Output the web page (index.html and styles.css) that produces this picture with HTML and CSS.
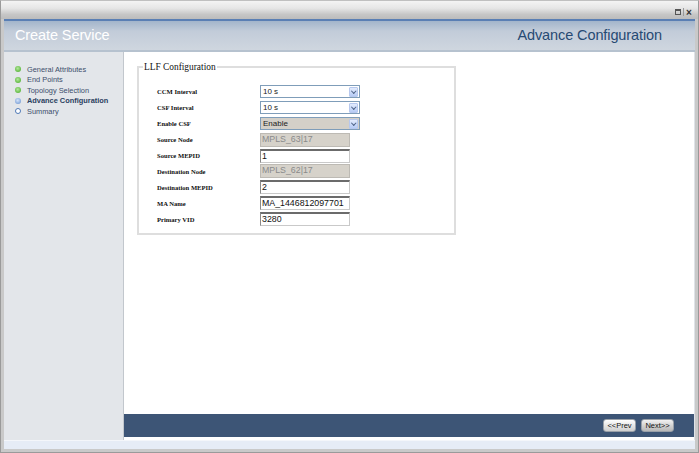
FILE: index.html
```html
<!DOCTYPE html>
<html>
<head>
<meta charset="utf-8">
<link rel="stylesheet" href="styles.css">
</head>
<body>
<div class="window">
  <div class="titlebar">
    <span class="tb-icon tb-max"></span>
    <span class="tb-sep"></span>
    <span class="tb-icon tb-close">×</span>
  </div>
  <div class="header">
    <div class="header-title">Create Service</div>
    <div class="header-step">Advance Configuration</div>
  </div>
  <div class="main">
    <div class="sidebar">
      <ul class="steps">
        <li class="step done"><span class="dot"></span>General Attributes</li>
        <li class="step done"><span class="dot"></span>End Points</li>
        <li class="step done"><span class="dot"></span>Topology Selection</li>
        <li class="step active"><span class="dot"></span>Advance Configuration</li>
        <li class="step todo"><span class="dot"></span>Summary</li>
      </ul>
    </div>
    <div class="content">
      <div class="pane">
        <fieldset class="box">
          <legend>LLF Configuration</legend>
          <div class="form">
            <label>CCM Interval</label>
            <div class="select"><span>10 s</span><i class="arrow"></i></div>
            <label>CSF Interval</label>
            <div class="select"><span>10 s</span><i class="arrow"></i></div>
            <label>Enable CSF</label>
            <div class="select disabled"><span>Enable</span><i class="arrow"></i></div>
            <label>Source Node</label>
            <div class="input disabled">MPLS_63|17</div>
            <label>Source MEPID</label>
            <div class="input">1</div>
            <label>Destination Node</label>
            <div class="input disabled">MPLS_62|17</div>
            <label>Destination MEPID</label>
            <div class="input">2</div>
            <label>MA Name</label>
            <div class="input">MA_1446812097701</div>
            <label>Primary VID</label>
            <div class="input">3280</div>
          </div>
        </fieldset>
      </div>
      <div class="footer">
        <button class="btn">&lt;&lt;Prev</button>
        <button class="btn">Next&gt;&gt;</button>
      </div>
    </div>
  </div>
  <div class="bottom"></div>
</div>
</body>
</html>
```

FILE: styles.css
```css
* { box-sizing: border-box; }
html, body { margin: 0; padding: 0; }
body {
  width: 699px;
  height: 453px;
  overflow: hidden;
  font-family: "Liberation Sans", Arial, sans-serif;
  background: #ffffff;
}
.window {
  width: 699px;
  height: 453px;
  display: flex;
  flex-direction: column;
  background: #c9c9c9;
  border: 1px solid #9a9a9a;
  border-top-color: #c0c0c0;
  padding: 0 3px 3px 3px;
}
.titlebar {
  height: 18px;
  margin: 0 -3px;
  background: linear-gradient(#f4f4f4 0%, #e6e6e6 40%, #c6c6c6 75%, #bcbcbc 100%);
  display: flex;
  justify-content: flex-end;
  align-items: center;
  padding: 4px 5px 0 0;
  gap: 2px;
}
.tb-icon {
  width: 7px;
  height: 7px;
  display: block;
}
.tb-max {
  border: 1px solid #555;
  border-top-width: 2px;
  width: 6px;
  height: 6px;
}
.tb-sep { width: 1px; height: 8px; background: #999; display: block; }
.tb-close {
  font-size: 10px;
  line-height: 7px;
  color: #333;
  font-weight: bold;
}
.header {
  height: 33px;
  border-top: 2px solid #5a7fb4;
  border-bottom: 2px solid #b6c2cf;
  background: linear-gradient(#a3b5cb 0%, #c2ccd9 35%, #cfd6df 100%);
  display: flex;
  justify-content: space-between;
  align-items: center;
  padding: 0 33px 1px 11px;
}
.header-title {
  color: #ffffff;
  font-size: 14.5px;
  letter-spacing: -0.1px;
}
.header-step {
  color: #274a73;
  font-size: 14.5px;
  letter-spacing: -0.1px;
}
.main {
  flex: 1;
  display: flex;
  background: #ffffff;
}
.sidebar {
  width: 120px;
  background: #e3e6ea;
  border-right: 1px solid #c2c7cd;
  padding-top: 12px;
}
.steps {
  list-style: none;
  margin: 0;
  padding: 0 0 0 11px;
}
.step {
  display: flex;
  align-items: center;
  height: 10.5px;
  font-size: 7.4px;
  color: #3c4e6a;
  white-space: nowrap;
}
.step.active { font-weight: bold; color: #2b3f60; }
.dot {
  width: 6px;
  height: 6px;
  border-radius: 50%;
  margin-right: 6px;
  flex: none;
}
.done .dot { background: radial-gradient(circle at 45% 40%, #b6e6a0 0%, #6cc24e 60%, #4fa03a 100%); }
.active .dot { background: radial-gradient(circle at 45% 40%, #d6e4f8 0%, #8fb0e0 60%, #5d84c0 100%); }
.todo .dot { border: 1.5px solid #4f79b6; background: #fff; }
.content {
  flex: 1;
  display: flex;
  flex-direction: column;
  border-right: 1px solid #dfe3e8;
}
.pane {
  flex: 1;
  padding: 10px 0 0 13px;
}
.box {
  width: 319px;
  height: 173px;
  margin: 0;
  border: 2px solid #dedede;
  padding: 4px 0 0 0;
}
.box legend {
  font-family: "Liberation Serif", "Times New Roman", serif;
  font-size: 9.4px;
  color: #111;
  padding: 0 1px;
  margin-left: 4px;
}
.form {
  display: grid;
  grid-template-columns: 103px 100px;
  grid-auto-rows: 15.9px;
  align-items: center;
  margin: 8px 0 0 18px;
}
.form label {
  font-family: "Liberation Serif", "Times New Roman", serif;
  font-weight: bold;
  font-size: 6.6px;
  color: #111;
}
.select {
  width: 100px;
  height: 13px;
  border: 1px solid #7f9db9;
  background: #fff;
  display: flex;
  align-items: center;
  justify-content: space-between;
  padding: 0 1px 0 2px;
  font-size: 8px;
  color: #222;
}
.select.disabled { background: #d4d0c8; }
.arrow {
  width: 9px;
  height: 10px;
  background: linear-gradient(#e2ebfd, #b6cbf5);
  border: 1px solid #b7c8ee;
  border-radius: 1px;
  position: relative;
}
.arrow::after {
  content: "";
  position: absolute;
  left: 1.5px;
  top: 1.5px;
  width: 2.5px;
  height: 2.5px;
  border-right: 1.3px solid #4d6185;
  border-bottom: 1.3px solid #4d6185;
  transform: rotate(45deg);
}
.input {
  width: 90px;
  height: 14px;
  border: 1px solid #c9c9c9;
  border-top: 2px solid #6b6b6b;
  border-left: 1px solid #8a8a8a;
  background: #fff;
  font-size: 8.8px;
  line-height: 11px;
  padding-left: 1px;
  color: #111;
  white-space: nowrap;
  overflow: hidden;
}
.input.disabled {
  background: #d6d2ca;
  color: #8a8a8a;
  border: 1px solid #bdbab4;
}
.footer {
  height: 23px;
  background: #3d5576;
  display: flex;
  justify-content: flex-end;
  align-items: center;
  gap: 5px;
  padding-right: 20px;
  margin-bottom: 3px;
}
.btn {
  width: 33px;
  height: 13px;
  padding: 0;
  border: 1px solid #9aa0a8;
  border-radius: 3px;
  background: linear-gradient(#ffffff, #e4e4e4 55%, #cfcfcf);
  font-family: "Liberation Sans", Arial, sans-serif;
  font-size: 7.5px;
  color: #111;
  line-height: 11px;
}
.btn + .btn { background: linear-gradient(#f2f2f2, #d0d0d0 55%, #b8b8b8); }
.bottom {
  height: 9px;
  background: #e6ecf6;
  border-top: 1px solid #f4f6fa;
}
```
